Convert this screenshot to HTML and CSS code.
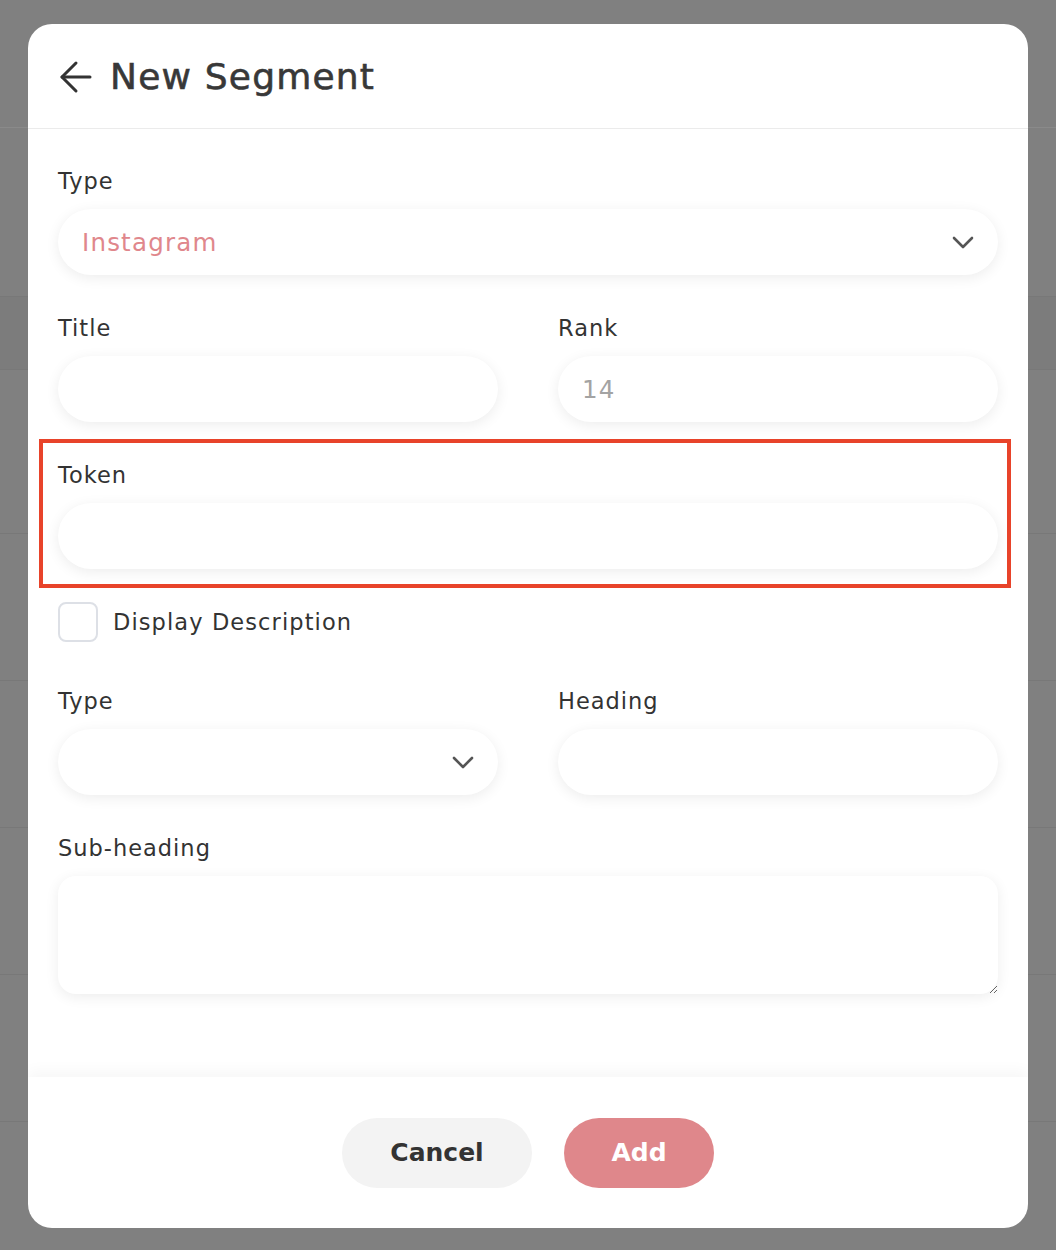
FILE: index.html
```html
<!DOCTYPE html>
<html lang="en">
<head>
    <meta charset="UTF-8">
    <meta name="viewport" content="width=device-width, initial-scale=1.0">
    <title>New Segment</title>
    <link rel="stylesheet" href="styles.css">
</head>
<body>
    <!-- page behind the dialog -->
    <div class="backdrop">
        <div class="bg-row bg-top"></div>
        <div class="bg-row bg-a"></div>
        <div class="bg-row bg-head"></div>
        <div class="bg-row bg-b"></div>
        <div class="bg-row"></div>
        <div class="bg-row"></div>
        <div class="bg-row"></div>
        <div class="bg-row"></div>
    </div>

    <div class="overlay">
        <div class="modal">
            <div class="modal-header">
                <svg class="back" width="34" height="34" viewBox="0 0 34 34" fill="none" stroke="#333" stroke-width="3" stroke-linecap="round" stroke-linejoin="round">
                    <path d="M31 17H3"/>
                    <path d="M17 3L3 17l14 14"/>
                </svg>
                <h1>New Segment</h1>
            </div>

            <div class="modal-body">
                <div class="field">
                    <label>Type</label>
                    <div class="select">
                        <select class="control filled">
                            <option>Instagram</option>
                        </select>
                        <svg class="chevron" width="22" height="14" viewBox="0 0 22 14" fill="none" stroke="#555" stroke-width="2.6" stroke-linecap="round" stroke-linejoin="round">
                            <path d="M2 2l9 9 9-9"/>
                        </svg>
                    </div>
                </div>

                <div class="row">
                    <div class="field">
                        <label>Title</label>
                        <input class="control" type="text">
                    </div>
                    <div class="field">
                        <label>Rank</label>
                        <input class="control" type="text" placeholder="14">
                    </div>
                </div>

                <div class="field highlighted">
                    <label>Token</label>
                    <input class="control" type="text">
                </div>

                <label class="check">
                    <span class="box"></span>
                    Display Description
                </label>

                <div class="row">
                    <div class="field">
                        <label>Type</label>
                        <div class="select">
                            <select class="control">
                                <option></option>
                            </select>
                            <svg class="chevron" width="22" height="14" viewBox="0 0 22 14" fill="none" stroke="#555" stroke-width="2.6" stroke-linecap="round" stroke-linejoin="round">
                                <path d="M2 2l9 9 9-9"/>
                            </svg>
                        </div>
                    </div>
                    <div class="field">
                        <label>Heading</label>
                        <input class="control" type="text">
                    </div>
                </div>

                <div class="field">
                    <label>Sub-heading</label>
                    <textarea class="control area"></textarea>
                </div>
            </div>

            <div class="modal-footer">
                <button class="btn btn-cancel">Cancel</button>
                <button class="btn btn-add">Add</button>
            </div>
        </div>
    </div>
</body>
</html>
```

FILE: styles.css
```css
body {
    margin: 0;
    font-family: "DejaVu Sans", "Noto Sans", sans-serif;
    color: #333;
    background: #808080;
    height: 1250px;
    overflow: hidden;
    position: relative;
}
.backdrop {
    display: flex;
    flex-direction: column;
}
.bg-row {
    height: 146px;
    border-bottom: 1px solid #787878;
    flex-shrink: 0;
}
.bg-top {
    height: 127px;
    border-bottom-color: #8a8a8a;
}
.bg-a {
    height: 168px;
}
.bg-head {
    height: 72px;
    background: #7c7c7c;
}
.bg-b {
    height: 163px;
}
.overlay {
    position: absolute;
    inset: 0;
    display: flex;
    justify-content: center;
    align-items: flex-start;
    padding-top: 24px;
}
.modal {
    width: 1000px;
    height: 1204px;
    background: #fff;
    border-radius: 24px;
    display: flex;
    flex-direction: column;
    overflow: hidden;
}
.modal-header {
    height: 104px;
    border-bottom: 1px solid #ebebeb;
    display: flex;
    align-items: center;
    padding: 0 30px;
    gap: 17px;
    flex-shrink: 0;
}
.modal-header h1 {
    margin: 0;
    font-size: 36px;
    font-weight: 500;
    color: #383838;
    -webkit-text-stroke: 0.6px #383838;
    letter-spacing: 1.2px;
}
.back {
    margin-left: 1px;
    margin-top: 2px;
}
.modal-body {
    flex: 1;
    padding: 36px 30px 0;
}
.field {
    margin-bottom: 37px;
    position: relative;
}
.field label {
    display: block;
    font-size: 22.5px;
    line-height: 32px;
    margin-bottom: 12px;
    color: #333;
    letter-spacing: 1px;
}
.row {
    display: grid;
    grid-template-columns: 1fr 1fr;
    column-gap: 60px;
}
.control {
    display: block;
    width: 100%;
    box-sizing: border-box;
    height: 66px;
    border: none;
    border-radius: 33px;
    background: #fff;
    box-shadow: 0 3px 14px rgba(0, 0, 0, 0.075);
    padding: 0 24px;
    font-family: inherit;
    font-size: 24.5px;
    letter-spacing: 1.2px;
    color: #333;
    outline: none;
    appearance: none;
    -webkit-appearance: none;
}
.control::placeholder {
    color: #a3a3a3;
}
.filled {
    color: #e0878c;
}
.select {
    position: relative;
}
.chevron {
    position: absolute;
    right: 24px;
    top: 27px;
    pointer-events: none;
}
.area {
    height: 118px;
    border-radius: 18px;
    padding: 16px 24px;
    resize: vertical;
}
.highlighted {
    margin-bottom: 33px;
}
.highlighted::after {
    content: "";
    position: absolute;
    top: -20px;
    left: -19px;
    right: -13px;
    bottom: -19px;
    border: 4px solid #e8432a;
    pointer-events: none;
}
.check {
    display: flex;
    align-items: center;
    gap: 15px;
    font-size: 22.5px;
    letter-spacing: 1.1px;
    height: 40px;
    margin-bottom: 43px;
    color: #333;
}
.box {
    width: 36px;
    height: 36px;
    border: 2px solid #dde0e6;
    border-radius: 8px;
    background: #fff;
}
.modal-footer {
    height: 151px;
    flex-shrink: 0;
    display: flex;
    justify-content: center;
    align-items: center;
    gap: 32px;
    box-shadow: 0 -6px 14px rgba(0, 0, 0, 0.035);
}
.btn {
    height: 70px;
    border: none;
    border-radius: 35px;
    font-family: inherit;
    font-size: 25px;
    font-weight: bold;
    cursor: pointer;
}
.btn-cancel {
    width: 190px;
    background: #f3f3f3;
    color: #333;
}
.btn-add {
    width: 150px;
    background: #df878b;
    color: #fff;
}
```
